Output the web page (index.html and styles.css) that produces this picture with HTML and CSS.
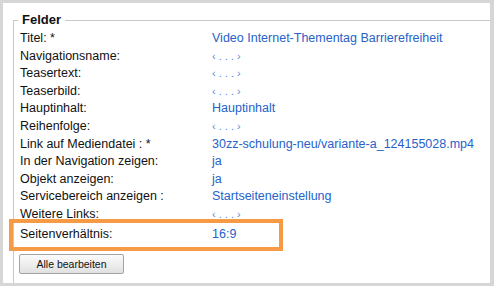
FILE: index.html
```
<!DOCTYPE html>
<html lang="de">
<head>
  <meta charset="UTF-8">
  <title>Felder</title>
  <link rel="stylesheet" href="styles.css">
</head>
<body>
  <div class="frame">
    <fieldset class="felder">
      <legend>Felder</legend>
      <div class="fields">
        <div class="row"><span class="label">Titel: *</span><a class="value">Video Internet-Thementag Barrierefreiheit</a></div>
        <div class="row"><span class="label">Navigationsname:</span><a class="value empty">‹ . . . ›</a></div>
        <div class="row"><span class="label">Teasertext:</span><a class="value empty">‹ . . . ›</a></div>
        <div class="row"><span class="label">Teaserbild:</span><a class="value empty">‹ . . . ›</a></div>
        <div class="row"><span class="label">Hauptinhalt:</span><a class="value">Hauptinhalt</a></div>
        <div class="row"><span class="label">Reihenfolge:</span><a class="value empty">‹ . . . ›</a></div>
        <div class="row"><span class="label">Link auf Mediendatei : *</span><a class="value">30zz-schulung-neu/variante-a_124155028.mp4</a></div>
        <div class="row"><span class="label">In der Navigation zeigen:</span><a class="value">ja</a></div>
        <div class="row"><span class="label">Objekt anzeigen:</span><a class="value">ja</a></div>
        <div class="row"><span class="label">Servicebereich anzeigen :</span><a class="value">Startseiteneinstellung</a></div>
        <div class="row"><span class="label">Weitere Links:</span><a class="value empty">‹ . . . ›</a></div>
        <div class="row marked"><span class="label">Seitenverhältnis:</span><a class="value">16:9</a></div>
      </div>
      <button class="edit-all">Alle bearbeiten</button>
    </fieldset>
  </div>
</body>
</html>
```

FILE: styles.css
```
html, body {
  margin: 0;
  padding: 0;
}

body {
  font-family: "Liberation Sans", Arial, sans-serif;
  font-size: 12.5px;
  color: #111;
  background: #fff;
}

.frame {
  width: 494px;
  height: 286px;
  box-sizing: border-box;
  border: 3px solid #d6d6d6;
  border-right-width: 4px;
  background: #fff;
  overflow: hidden;
  padding: 9px 0 0 10px;
}

.felder {
  margin: 0 -6px 0 0;
  padding: 0 6px 40px 6px;
  border: 1px solid #c9c9c9;
  min-height: 300px;
}

.felder legend {
  font-weight: bold;
  font-size: 13px;
  line-height: 16px;
  padding: 0 4px;
  margin-left: -2px;
  color: #111;
}

.fields {
  display: grid;
  grid-template-columns: 1fr;
  padding-top: 2px;
}

.row {
  display: grid;
  grid-template-columns: 192px 1fr;
  line-height: 17.6px;
  height: 17.6px;
}

.row.marked {
  position: relative;
  margin-top: 2px;
}

/* orange Markierung über der Zeile */
.row.marked::after {
  content: "";
  position: absolute;
  left: -11px;
  top: -7px;
  width: 274px;
  height: 32px;
  box-sizing: border-box;
  border: 4px solid #f79a45;
}

.value {
  color: #2662c9;
  text-decoration: none;
  white-space: nowrap;
}

.value.empty {
  font-size: 11px;
  color: #5a8ade;
}

.edit-all {
  margin: 11px 0 0 -1px;
  width: 105px;
  height: 20px;
  padding: 0;
  font-family: "Liberation Sans", Arial, sans-serif;
  font-size: 10.5px;
  color: #111;
  background: linear-gradient(#fbfbfb, #e1e1e1);
  border: 1px solid #a3a3a3;
  border-radius: 2px;
}
```
